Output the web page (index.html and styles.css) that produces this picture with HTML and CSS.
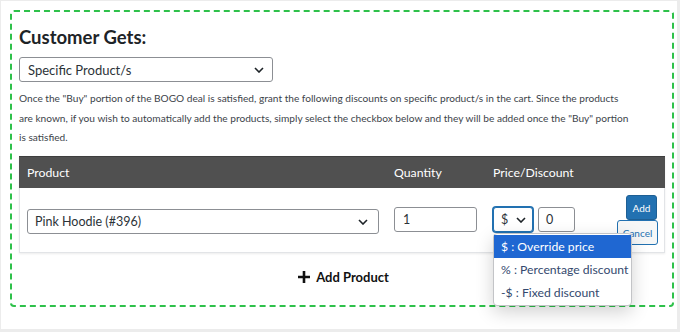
FILE: index.html
```html
<!DOCTYPE html>
<html>
<head>
<meta charset="utf-8">
<link rel="stylesheet" href="styles.css">
</head>
<body>
<div class="frame">
  <div class="box">
    <h2 class="title">Customer Gets:</h2>
    <div class="select type-select">
      <span>Specific Product/s</span>
      <svg class="chev" width="10" height="6" viewBox="0 0 10 6"><path d="M1 1l4 4 4-4" fill="none" stroke="#1d2327" stroke-width="1.6"/></svg>
    </div>
    <p class="desc">Once the "Buy" portion of the BOGO deal is satisfied, grant the following discounts on specific product/s in the cart. Since the products<br>are known, if you wish to automatically add the products, simply select the checkbox below and they will be added once the "Buy" portion<br>is satisfied.</p>
    <div class="table">
      <div class="thead">
        <div class="c-prod">Product</div>
        <div class="c-qty">Quantity</div>
        <div class="c-price">Price/Discount</div>
      </div>
      <div class="trow">
        <div class="c-prod">
          <div class="select prod-select">
            <span>Pink Hoodie (#396)</span>
            <svg class="chev" width="10" height="6" viewBox="0 0 10 6"><path d="M1 1l4 4 4-4" fill="none" stroke="#1d2327" stroke-width="1.6"/></svg>
          </div>
        </div>
        <div class="c-qty"><div class="input qty">1</div></div>
        <div class="c-price">
          <div class="price-wrap">
            <div class="select cur-select">
              <span>$</span>
              <svg class="chev" width="10" height="6" viewBox="0 0 10 6"><path d="M1 1l4 4 4-4" fill="none" stroke="#1d2327" stroke-width="1.6"/></svg>
            </div>
            <div class="input amt">0</div>
            <ul class="menu">
              <li class="active">$ : Override price</li>
              <li>% : Percentage discount</li>
              <li>-$ : Fixed discount</li>
            </ul>
          </div>
        </div>
        <div class="c-act">
          <button class="btn add">Add</button>
          <button class="btn cancel">Cancel</button>
        </div>
      </div>
    </div>
    <div class="add-product">
      <svg width="12" height="12" viewBox="0 0 12 12"><path d="M6 0v12M0 6h12" stroke="#111" stroke-width="2.6"/></svg>
      <span>Add Product</span>
    </div>
  </div>
</div>
</body>
</html>
```

FILE: styles.css
```css
* { box-sizing: border-box; }
html, body { margin: 0; padding: 0; background: #fff; }
body { font-family: "Lato", "Noto Sans", sans-serif; color: #1d2327; }
.frame {
  width: 680px; height: 332px;
  border-style: solid; border-color: #ececec;
  border-width: 1px 3px 3px 1px;
  padding: 9px 0 0 9px;
}
.box {
  width: 664px; height: 297px;
  border: 2px dashed #2ec14a;
  border-radius: 4px;
  padding: 0 7px;
}
.title {
  margin: 14px 0 0 0;
  font-size: 18.5px; font-weight: 700; line-height: 22px;
  color: #1d2327;
}
.select {
  display: flex; align-items: center; justify-content: space-between;
  border: 1px solid #8c8f94; border-radius: 3px; background: #fff;
  font-size: 13px; color: #2c3338;
}
.type-select { width: 254px; height: 25px; margin-top: 9px; padding: 0 8px 0 8px; }
.chev { flex: none; }
.desc {
  margin: 7px 0 0 0;
  font-size: 10.15px; line-height: 19.5px; color: #3c434a;
  white-space: nowrap;
}
.table {
  margin-top: 8.5px;
  width: 646px;
  box-shadow: 0 1px 2px rgba(0,0,0,0.08);
  border: 1px solid #e2e4e7; border-top: 0;
}
.thead {
  display: flex; align-items: center;
  height: 32px; background: #505050; color: #fff;
  font-size: 12.3px; border-top: 1px solid #3e3e3e;
  margin: 0 -1px;
  padding-left: 1px;
}
.c-prod { width: 374px; padding-left: 7px; }
.c-qty { width: 99px; }
.c-price { width: 120px; }
.c-act { flex: 1; }
.trow { display: flex; align-items: flex-start; height: 64px; position: relative; }
.trow .c-prod { padding-top: 21px; }
.trow .c-qty { padding-top: 19px; }
.trow .c-price { padding-top: 19px; }
.prod-select { width: 352px; height: 25px; padding: 0 10px 0 7px; font-size: 12.5px; }
.input {
  height: 25px; border: 1px solid #8c8f94; border-radius: 3px;
  font-size: 12.5px; color: #2c3338; padding: 0 8px; line-height: 23px;
}
.qty { width: 83px; }
.price-wrap { display: flex; gap: 5px; position: relative; }
.cur-select {
  width: 40px; height: 25px; padding: 0 6px 0 7px;
  border: 1px solid #2271b1; box-shadow: 0 0 0 1px #2271b1;
  font-size: 12.5px;
}
.amt { width: 37px; padding: 0 7px; }
.menu {
  position: absolute; left: 0; top: 26px;
  width: 139px; margin: 0; padding: 1px 0;
  list-style: none; background: #fff;
  border: 1px solid #c3c4c7; border-radius: 4px;
  box-shadow: 0 6px 18px rgba(0,0,0,0.18);
  font-size: 12.2px; color: #34496e;
  z-index: 5;
}
.menu li { height: 23px; line-height: 23px; padding-left: 7px; white-space: nowrap; }
.menu li.active { background: #1f67d2; color: #fff; }
.c-act { display: flex; flex-direction: column; align-items: flex-end; padding-top: 7px; padding-right: 6px; }
.btn {
  font-family: inherit; font-size: 10px; border-radius: 3px; padding: 0; cursor: pointer;
}
.add { width: 31px; height: 25px; background: #2271b1; color: #fff; border: 1px solid #1e5f94; margin-right: 1px; }
.cancel { width: 41px; height: 25px; background: #f6f7f7; color: #2271b1; border: 1px solid #2271b1; margin-top: 0; }
.add-product {
  display: flex; align-items: center; justify-content: center; gap: 6px;
  margin-top: 15px; font-size: 13px; line-height: 18px; font-weight: 700; color: #111;
  padding-left: 3px;
}
```
